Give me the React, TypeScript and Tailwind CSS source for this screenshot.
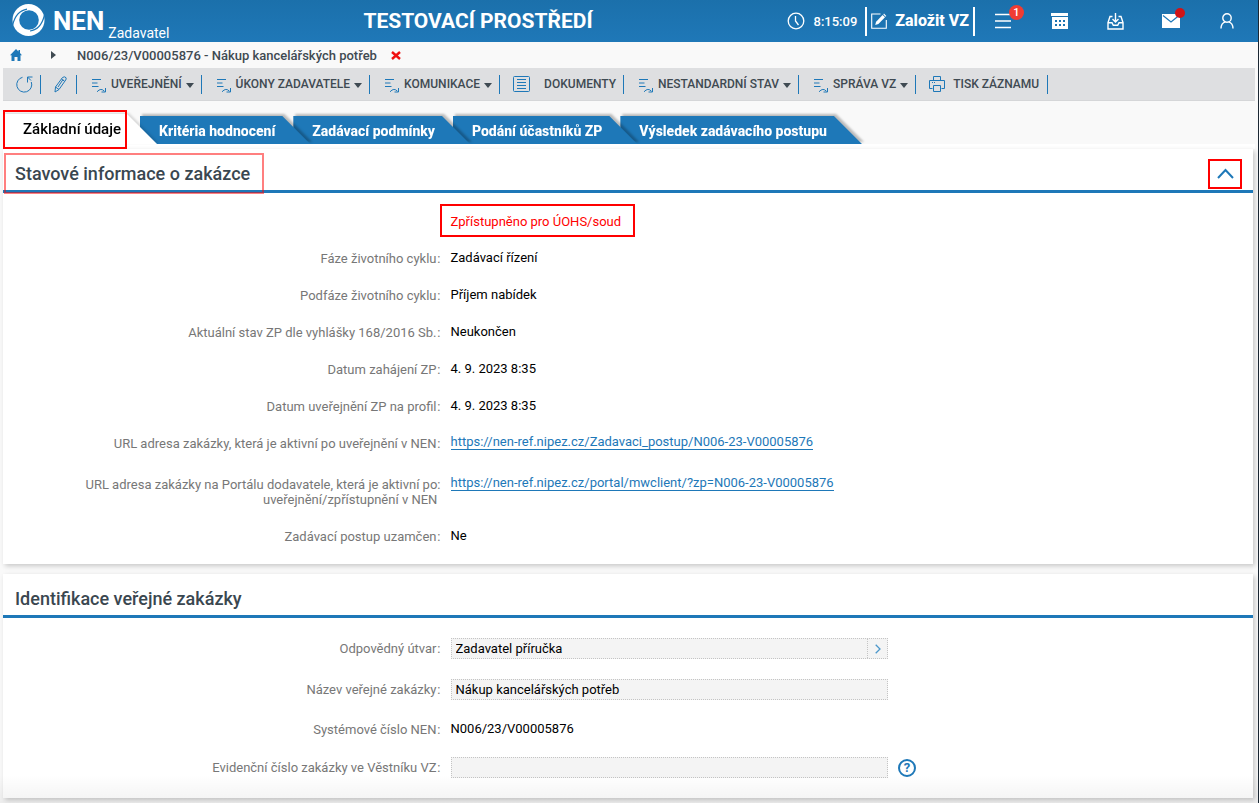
import type { ReactNode } from 'react'

const BLUE = '#1e78b8'

const tabs = ['Kritéria hodnocení', 'Zadávací podmínky', 'Podání účastníků ZP', 'Výsledek zadávacího postupu']

export default function App() {
  return (
    <div className="relative flex min-h-screen flex-col border-r border-[#1b2733] bg-[#f9f9f9] font-[Roboto,'Liberation_Sans',sans-serif] text-[13px] leading-[15px] text-black">
      <Header />
      <Breadcrumb />
      <Toolbar />
      <main className="px-[3px] pb-1">
        <Tabs />
        <div className="h-[5px] bg-white" />
        <div className="mr-[2px] flex flex-col gap-[10px]">
          <Section title="Stavové informace o zakázce" marked collapsible>
            <Row>
              <div className="-mt-[10px] -mb-2 -ml-[11px] border-2 border-[#f00] pt-2 pr-3 pb-[6px] pl-[9px] text-[#f00]">
                Zpřístupněno pro ÚOHS/soud
              </div>
            </Row>
            <Row label="Fáze životního cyklu">Zadávací řízení</Row>
            <Row label="Podfáze životního cyklu">Příjem nabídek</Row>
            <Row label="Aktuální stav ZP dle vyhlášky 168/2016 Sb.">Neukončen</Row>
            <Row label="Datum zahájení ZP">4. 9. 2023 8:35</Row>
            <Row label="Datum uveřejnění ZP na profil">4. 9. 2023 8:35</Row>
            <Row label="URL adresa zakázky, která je aktivní po uveřejnění v NEN" tall>
              <RowLink href="https://nen-ref.nipez.cz/Zadavaci_postup/N006-23-V00005876" />
            </Row>
            <Row label="URL adresa zakázky na Portálu dodavatele, která je aktivní po uveřejnění/zpřístupnění v NEN" tall>
              <RowLink href="https://nen-ref.nipez.cz/portal/mwclient/?zp=N006-23-V00005876" />
            </Row>
            <Row label="Zadávací postup uzamčen">Ne</Row>
          </Section>

          <Section title="Identifikace veřejné zakázky">
            <FieldRow id="utvar" label="Odpovědný útvar" value="Zadavatel příručka" picker />
            <FieldRow id="nazev" label="Název veřejné zakázky" value="Nákup kancelářských potřeb" />
            <Row label="Systémové číslo NEN">N006/23/V00005876</Row>
            <FieldRow id="evidencni" label="Evidenční číslo zakázky ve Věstníku VZ" value="" help />
          </Section>
        </div>
      </main>
      {/* soft fade over the bottom edge of the scrolled page */}
      <div className="pointer-events-none absolute inset-x-0 bottom-0 h-7 bg-linear-to-b from-transparent to-black/5" />
    </div>
  )
}

function Header() {
  return (
    <header className="flex h-[42px] items-center bg-linear-to-b from-[#1b70ab] to-[#1f78b8] pr-[3px] text-white">
      <div className="flex h-full items-center pl-3">
        <Logo />
        <span className="ml-2 text-[26px] leading-7 font-bold">NEN</span>
        <span className="ml-1 self-end text-sm leading-[18px]">Zadavatel</span>
      </div>
      <div className="flex-1 text-center text-[21px] leading-6 font-bold">TESTOVACÍ PROSTŘEDÍ</div>
      <div className="flex items-center">
        <svg width="18" height="18" viewBox="0 0 18 18" fill="none" stroke="#fff" strokeWidth="1.3">
          <circle cx="9" cy="9" r="7.8" />
          <path d="M8.5 4v5l3 4" />
        </svg>
        <time className="mr-2 ml-[9px] font-medium">8:15:09</time>
        <button className="flex h-[29px] items-center gap-2 border-x-2 border-white px-1 text-base font-extrabold">
          <svg width="16" height="16" viewBox="0 0 16 16" fill="none" stroke="#fff">
            <path d="M9.5 1H.7v14.3h14.6V7" strokeWidth="1.1" />
            <path d="M4.2 12l.9-3.2L11.6 2l2.4 2.3-6.6 6.8z" fill="#fff" stroke="none" />
            <path d="M12.3 1.4l.7-.8 2.3 2.3-.8.8z" fill="#fff" stroke="none" />
          </svg>
          Založit VZ
        </button>
        <HeaderButton label="Úkoly">
          <svg width="18" height="16" viewBox="0 0 18 16" fill="none" stroke="#fff" strokeWidth="1.6">
            <path d="M1 1.5h16M1 8h16M1 14.5h16" />
          </svg>
          <span className="absolute top-[5px] right-[7px] flex h-[15px] w-[15px] items-center justify-center rounded-full bg-[#f03c32] text-[11px] leading-none font-medium">
            1
          </span>
        </HeaderButton>
        <HeaderButton label="Kalendář">
          <svg width="17" height="16" viewBox="0 0 17 16" fill="#fff">
            <path d="M0 0h17v3H0z" />
            <path
              fillRule="evenodd"
              d="M1 4h16v12H1zM4 7h2v2H4zM8 7h2v2H8zM12 7h2v2h-2zM4 11h2v2H4zM8 11h2v2H8zM12 11h2v2h-2z"
            />
          </svg>
        </HeaderButton>
        <HeaderButton label="Stažené">
          <svg width="17" height="17" viewBox="0 0 17 17" fill="none" stroke="#fff" strokeWidth="1.4">
            <path d="M8.5 0v9M5.5 6l3 3 3-3" />
            <path d="M5.5 3.5H3L1 9.5V16h15V9.500l-2-6h-2.500" />
            <path d="M1 9.8h4l1.300 2.500h4.400L12 9.800h4" />
          </svg>
        </HeaderButton>
        <HeaderButton label="Zprávy">
          <svg width="18" height="14" viewBox="0 0 18 14">
            <path d="M0 0h18v14H0z" fill="#fff" />
            <path d="M1 1.5L9 8l8-6.5" fill="none" stroke={BLUE} strokeWidth="1.2" />
          </svg>
          <span className="absolute top-2 right-[14px] h-[10px] w-[10px] rounded-full bg-[#d01317]" />
        </HeaderButton>
        <HeaderButton label="Uživatel">
          <svg width="14" height="16" viewBox="0 0 14 16" fill="none" stroke="#fff" strokeWidth="1.4">
            <circle cx="7" cy="5" r="4.2" />
            <path d="M1 15.500c0-3.500 2-6 4.500-6.700M13 15.500c0-3.500-2-6-4.500-6.700" />
          </svg>
        </HeaderButton>
      </div>
    </header>
  )
}

function Logo() {
  return (
    <svg width="33" height="34" viewBox="0 0 33 34">
      <circle cx="16.5" cy="16" r="16" fill="#fff" />
      <circle cx="17" cy="16" r="9.8" fill={BLUE} />
      <path
        d="M.5 21.500C2.500 13 7 6.500 15 5.200M32.500 11c-2 8.500-7 15-14.500 16"
        fill="none"
        stroke={BLUE}
        strokeWidth="1.2"
      />
    </svg>
  )
}

function HeaderButton({ label, children }: { label: string; children: ReactNode }) {
  return (
    <button aria-label={label} className="relative flex h-[42px] w-14 items-center justify-center">
      {children}
    </button>
  )
}

function Breadcrumb() {
  return (
    <nav className="flex h-[26px] items-center pl-[10px] font-medium text-[#3f4a52]">
      <a href="#" aria-label="Domů">
        <svg width="12" height="12" viewBox="0 0 12 12" fill={BLUE}>
          <path d="M6 0l2.500 2.500V1H10v3l2 2.200h-1.500V12h-3V8h-3v4h-3V6.200H0z" />
        </svg>
      </a>
      <svg className="ml-[29px]" width="5" height="8" viewBox="0 0 5 8" fill="#3f4a52">
        <path d="M0 0l5 4-5 4z" />
      </svg>
      <span className="ml-[21px]">N006/23/V00005876 - Nákup kancelářských potřeb</span>
      <button aria-label="Zavřít" className="ml-[14px]">
        <svg width="10" height="9" viewBox="0 0 10 9" stroke="#f01010" strokeWidth="2.4">
          <path d="M1 1l8 7M9 1L1 8" />
        </svg>
      </button>
    </nav>
  )
}

function Toolbar() {
  return (
    <div className="mx-[3px] flex h-[33px] items-center border-b border-[#d5d6d8] bg-[#dedfe1] text-xs font-medium text-[#3f4a52]">
      <button aria-label="Obnovit" className="flex h-[19px] items-center border-r border-[#1e78b8] pr-[7px] pl-[13px]">
        <svg width="17" height="17" viewBox="0 0 17 17" fill="none" stroke={BLUE}>
          <path d="M6.500 1.300A7.500 7.500 0 1 0 15.300 6" />
          <path d="M16.500 1h-5v5.500M11.500 1l3.500 3.500" />
        </svg>
      </button>
      <button aria-label="Upravit" className="flex h-[19px] items-center border-r border-[#1e78b8] pr-[9px] pl-[13px]">
        <svg width="13" height="17" viewBox="0 0 13 17" fill="none" stroke={BLUE}>
          <path d="M1 16l.5-5L8.500 1.500q2-1.500 3.500.2.500 1.300-.3 2.300L5 13.500z" />
          <path d="M1.500 11l3.500 2.500M4 11l5-7.500M7.500 3l3 2.200" />
        </svg>
      </button>
      <MenuItem>UVEŘEJNĚNÍ</MenuItem>
      <MenuItem>ÚKONY ZADAVATELE</MenuItem>
      <MenuItem>KOMUNIKACE</MenuItem>
      <button className="flex h-[19px] items-center border-r border-[#1e78b8] pr-[7px] pl-[13px]">
        <svg className="mr-[14px]" width="17" height="16" viewBox="0 0 17 16" fill="none" stroke={BLUE}>
          <rect x=".5" y=".5" width="16" height="15" rx="1" />
          <path d="M4 3.500h9M4 6.500h9M4 9.500h9M4 12.500h9" />
        </svg>
        DOKUMENTY
      </button>
      <MenuItem>NESTANDARDNÍ STAV</MenuItem>
      <MenuItem>SPRÁVA VZ</MenuItem>
      <button className="flex h-[19px] items-center border-r border-[#1e78b8] pr-2 pl-[13px]">
        <svg className="mr-2" width="16" height="16" viewBox="0 0 16 16" fill="none" stroke={BLUE}>
          <path d="M4.500 4.500v-4h7v4M3.500 12.500h-3v-8h15v8h-3" />
          <path d="M4.500 9.500h7v6h-7zM3 6.500h1M5 6.500h1" />
        </svg>
        TISK ZÁZNAMU
      </button>
    </div>
  )
}

function MenuItem({ children }: { children: ReactNode }) {
  return (
    <button className="flex h-[19px] items-center border-r border-[#1e78b8] pr-[7px] pl-[15px]">
      <svg className="mt-1 mr-1" width="15" height="14" viewBox="0 0 15 14" fill="none" stroke={BLUE}>
        <path d="M0 .5h9M0 4h5.500M0 7.500h6.500" />
        <path d="M5 12.800q4-4.500 7.500-.5M13.500 9v4H9.500" />
      </svg>
      {children}
      <svg className="mt-[2px] ml-1" width="8" height="5" viewBox="0 0 8 5" fill="#3f4a52">
        <path d="M0 0h8L4 5z" />
      </svg>
    </button>
  )
}

// Every tab is drawn over the slanted edge of the one after it.
const zOrder = ['z-40', 'z-30', 'z-20', 'z-10']

function Tabs() {
  return (
    <div className="flex h-[43px] items-end">
      <div className="relative z-50">
        <div className="drop-shadow-[2px_-1px_1px_rgba(0,0,0,0.12)]">
          <a
            href="#"
            className="block bg-white pt-2 pr-9 pb-[7px] pl-5 text-[15px] leading-[15px] font-medium [clip-path:polygon(0_0,calc(100%_-_30px)_0,100%_100%,0_100%)]"
          >
            Základní údaje
          </a>
        </div>
        <div className="pointer-events-none absolute -top-1 right-[30px] -bottom-[5px] left-0 border-2 border-[#f00]" />
      </div>
      {tabs.map((tab, i) => (
        <div key={tab} className={`relative -ml-[17px] drop-shadow-[2px_-2px_1px_rgba(0,0,0,0.25)] ${zOrder[i]}`}>
          <a
            href="#"
            className="block bg-[#1e78b8] pt-2 pr-[35px] pb-[5px] pl-[19px] text-sm leading-[15px] font-extrabold text-white [clip-path:polygon(0_0,calc(100%_-_28px)_0,100%_100%,0_100%)]"
          >
            {tab}
          </a>
        </div>
      ))}
    </div>
  )
}

type SectionProps = { title: string; marked?: boolean; collapsible?: boolean; children: ReactNode }

function Section({ title, marked, collapsible, children }: SectionProps) {
  return (
    <section className="bg-white pb-[10px] shadow-[2px_2px_5px_rgba(0,0,0,0.2)]">
      <div className="mb-[10px] flex h-11 items-center justify-between border-b-3 border-[#1e78b8] pr-[11px] pl-3">
        <h2 className="relative mt-[9px] text-lg leading-6 font-medium text-[#3a4750]">
          {title}
          {marked && (
            <span className="pointer-events-none absolute -top-[9px] -right-[14px] -bottom-2 -left-[11px] border-2 border-[#f00]/50" />
          )}
        </h2>
        {collapsible && (
          <button aria-label="Sbalit" className="mt-2 flex h-[30px] w-[34px] items-center justify-center border-2 border-[#f00]">
            <svg width="17" height="11" viewBox="0 0 17 11" fill="none" stroke={BLUE} strokeWidth="2">
              <path d="M1 10l7.500-8 7.500 8" />
            </svg>
          </button>
        )}
      </div>
      {children}
    </section>
  )
}

function LabelText({ label }: { label?: string }) {
  return (
    <span className="flex justify-end pl-16 text-right text-[#777]">
      <span>{label}</span>
      {label && <span className="w-1 text-right">:</span>}
    </span>
  )
}

function Row({ label, tall, children }: { label?: string; tall?: boolean; children: ReactNode }) {
  return (
    <div className={`grid grid-cols-[35%_1fr] gap-x-[10px] pt-3 pb-[10px] ${tall ? 'min-h-[41px]' : ''}`}>
      <LabelText label={label} />
      <div className="-mt-px flex items-start">{children}</div>
    </div>
  )
}

function RowLink({ href }: { href: string }) {
  return (
    <a href={href} className="border-b border-[#1e78b8] leading-[14px] text-[#1e78b8]">
      {href}
    </a>
  )
}

type FieldRowProps = { id: string; label: string; value: string; picker?: boolean; help?: boolean }

function FieldRow({ id, label, value, picker, help }: FieldRowProps) {
  return (
    <div className="grid grid-cols-[35%_35%_1fr] items-center gap-x-[10px] py-[10px]">
      <label htmlFor={id}>
        <LabelText label={label} />
      </label>
      <div className="flex h-[21px] border border-dotted border-[#c4c4c4] bg-[#f4f4f4]">
        <input id={id} defaultValue={value} className="min-w-0 flex-1 bg-transparent px-1 outline-none" />
        {picker && (
          <button aria-label="Vybrat" className="flex w-5 items-center justify-center border-l border-dotted border-[#c4c4c4]">
            <svg width="6" height="10" viewBox="0 0 6 10" fill="none" stroke="#4b97cb" strokeWidth="1.3">
              <path d="M.7.7L5 5 .7 9.300" />
            </svg>
          </button>
        )}
      </div>
      {help && (
        <button
          aria-label="Nápověda"
          className="-my-1 flex h-[18px] w-[18px] items-center justify-center rounded-full border-2 border-[#1e78b8] leading-none font-bold text-[#1e78b8]"
        >
          ?
        </button>
      )}
    </div>
  )
}
